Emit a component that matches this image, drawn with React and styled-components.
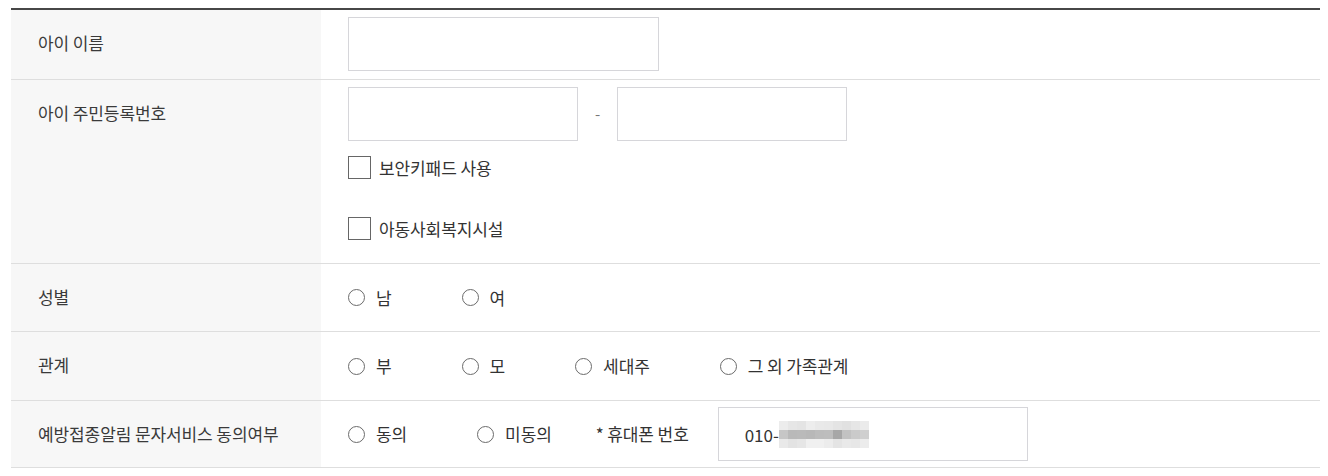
import React from 'react';
import styled, { createGlobalStyle } from 'styled-components';

const GlobalStyle = createGlobalStyle`
  html, body {
    margin: 0;
    padding: 0;
    background: #fff;
  }
  body {
    font-family: 'Noto Sans CJK KR', 'Noto Sans', sans-serif;
    color: #333;
  }
  * {
    box-sizing: border-box;
  }
`;

const Page = styled.div`
  padding: 8px 8px 0 11px;
`;

const Table = styled.div`
  border-top: 2px solid #474747;
`;

const Row = styled.div`
  display: grid;
  grid-template-columns: 310px 1fr;
  border-bottom: 1px solid #dedede;
`;

const Th = styled.div`
  background: #f7f7f7;
  padding: 21px 27px 0;
  font-size: 17px;
  line-height: 24px;
  letter-spacing: -0.1px;
  color: #3a3a3a;
`;

const Td = styled.div`
  display: flex;
  flex-direction: ${({ $column }) => ($column ? 'column' : 'row')};
  align-items: ${({ $column }) => ($column ? 'flex-start' : 'center')};
  padding: ${({ $pad }) => $pad || '0 27px'};
  min-height: ${({ $minH }) => ($minH ? `${$minH}px` : 'auto')};
`;

const TextInput = styled.input`
  width: ${({ $w }) => $w || 311}px;
  height: 54px;
  border: 1px solid #d6d6da;
  background: #fff;
  padding: 0 26px;
  font-family: inherit;
  font-size: 16px;
  color: #333;
  outline: none;
`;

const InputLine = styled.div`
  display: flex;
  align-items: center;
`;

const Dash = styled.span`
  margin: 0 17px;
  color: #777;
  font-size: 15px;
  line-height: 24px;
`;

const CheckLine = styled.label`
  display: flex;
  align-items: center;
  margin-top: ${({ $top }) => $top}px;
  font-size: 17px;
  line-height: 23px;
  letter-spacing: -0.1px;
  color: #333;
`;

const Box = styled.span`
  width: 23px;
  height: 23px;
  border: 1px solid #666;
  background: #fff;
  margin-right: 8px;
  flex-shrink: 0;
`;

const Radio = styled.label`
  display: inline-flex;
  align-items: center;
  margin-right: ${({ $gap }) => ($gap === undefined ? 70 : $gap)}px;
  font-size: 17px;
  line-height: 24px;
  letter-spacing: -0.1px;
  color: #333;
  white-space: nowrap;
`;

const Circle = styled.span`
  width: 17px;
  height: 17px;
  border: 1px solid #6b6b6b;
  border-radius: 50%;
  background: #fff;
  margin-right: 11px;
  flex-shrink: 0;
`;

const FieldLabel = styled.span`
  font-size: 17px;
  line-height: 24px;
  letter-spacing: -0.1px;
  color: #333;
  margin-right: 29px;
  white-space: nowrap;
`;

const PhoneBox = styled.div`
  width: 310px;
  height: 54px;
  border: 1px solid #d6d6da;
  display: flex;
  align-items: center;
  padding-left: 26px;
  font-size: 17px;
  color: #333;
`;

const Mosaic = styled.div`
  display: grid;
  grid-template-columns: repeat(10, 9px);
  grid-auto-rows: 9px;
  margin-top: 1px;
`;

const Tile = styled.span`
  background: ${({ $c }) => $c};
`;

const tiles = [
  '#ececec', '#e6e6e6', '#e4e4e4', '#ededed', '#e9e9e9', '#e8e8e8', '#e4e4e4', '#e1e1e1', '#e6e6e6', '#ebebeb',
  '#c6c6c6', '#b9b9b9', '#bababa', '#b8b8b8', '#bcbcbc', '#bdbdbd', '#a7a7a7', '#c2c2c2', '#cacaca', '#cfcfcf',
  '#e9e9e9', '#e3e3e3', '#e6e6e6', '#f0f0f0', '#f0f0f0', '#ececec', '#e4e4e4', '#e9e9e9', '#e7e7e7', '#ececec',
];

export default function App() {
  return (
    <>
      <GlobalStyle />
      <Page>
        <Table>
          <Row>
            <Th>아이 이름</Th>
            <Td $pad="7px 27px 8px">
              <TextInput type="text" />
            </Td>
          </Row>

          <Row>
            <Th>아이 주민등록번호</Th>
            <Td $column $pad="7px 27px 23px">
              <InputLine>
                <TextInput type="text" $w={230} />
                <Dash>-</Dash>
                <TextInput type="password" $w={230} />
              </InputLine>
              <CheckLine $top={15}>
                <Box />
                보안키패드 사용
              </CheckLine>
              <CheckLine $top={38}>
                <Box />
                아동사회복지시설
              </CheckLine>
            </Td>
          </Row>

          <Row>
            <Th>성별</Th>
            <Td $minH={67}>
              <Radio><Circle />남</Radio>
              <Radio><Circle />여</Radio>
            </Td>
          </Row>

          <Row>
            <Th>관계</Th>
            <Td $minH={68}>
              <Radio><Circle />부</Radio>
              <Radio><Circle />모</Radio>
              <Radio><Circle />세대주</Radio>
              <Radio><Circle />그 외 가족관계</Radio>
            </Td>
          </Row>

          <Row>
            <Th>예방접종알림 문자서비스 동의여부</Th>
            <Td $pad="6px 27px">
              <Radio><Circle />동의</Radio>
              <Radio $gap={44}><Circle />미동의</Radio>
              <FieldLabel>* 휴대폰 번호</FieldLabel>
              <PhoneBox>
                010-
                <Mosaic>
                  {tiles.map((c, i) => (
                    <Tile key={i} $c={c} />
                  ))}
                </Mosaic>
              </PhoneBox>
            </Td>
          </Row>
        </Table>
      </Page>
    </>
  );
}
